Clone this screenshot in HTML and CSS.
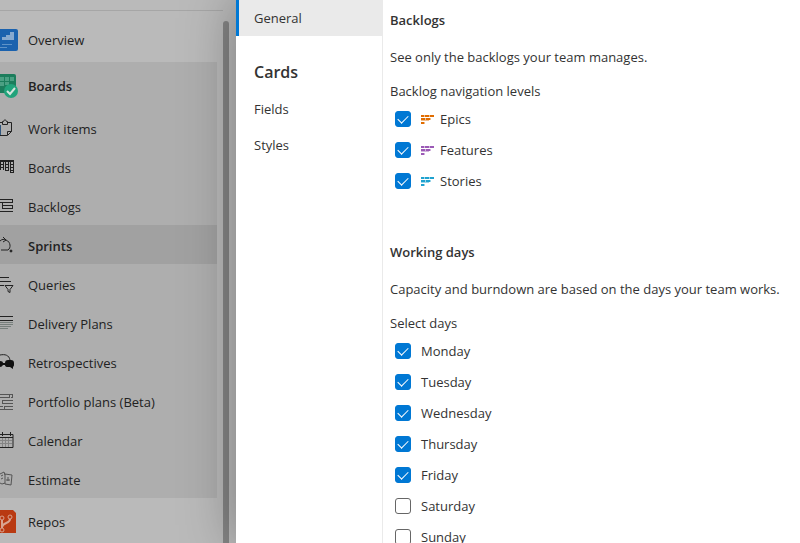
FILE: index.html
```
<!doctype html>
<html lang="en">
    <head>
        <meta charset="UTF-8" />
        <meta name="viewport" content="width=device-width, initial-scale=1.0" />
        <title>Team Settings</title>
        <link rel="stylesheet" href="styles.css">
    </head>
    <body>
        <nav class="sidebar">
            <div class="sidebar-nav">
                <a class="product" href="#">
                    <svg class="icon" viewBox="0 0 20 24">
                        <path d="M0 1h16a2 2 0 0 1 2 2v18a2 2 0 0 1-2 2H0z" fill="#1b62ae" />
                        <path d="M2 9h4v3H2zM6 7h4v5H6zM10 4h4v8h-4z" fill="#86a9cf" />
                        <path d="M2 16h10v1H2zM0 19h7v1H0z" fill="#5f93c8" />
                    </svg>
                    Overview
                </a>
                <div class="group">
                    <a class="product open" href="#">
                        <svg class="icon" viewBox="0 0 20 24">
                            <path d="M0 0h14a2 2 0 0 1 2 2v17H0z" fill="#1c7d5c" />
                            <path d="M0 3h4v4H0zM5 3h4v4H5zM10 3h4v4h-4zM0 8h4v4H0zM5 8h4v3H5z" fill="#4ba083" />
                            <circle cx="11" cy="17" r="7" fill="#21a37b" />
                            <path d="M7 17l3 3 5-6" fill="none" stroke="#d5e5de" stroke-width="2" />
                        </svg>
                        Boards
                    </a>
                    <a class="item" href="#">
                        <svg class="icon line" viewBox="0 0 20 24">
                            <path d="M0 5.500h2M8 5.500h3.500v9l-4 4H0M7.500 18v-3.500h4" />
                            <path d="M2.500 7.500v-3h1c0-2 3-2 3 0h1v3z" />
                            <path d="M.5 8v10" stroke="#31567d" />
                        </svg>
                        Work items
                    </a>
                    <a class="item" href="#">
                        <svg class="icon line" viewBox="0 0 20 24">
                            <path d="M0 5h14" stroke-width="2" />
                            <path d="M0 8.500h3M5 8.500h3M10 8.500h4M0 11.500h3M5 11.500h3M10 11.500h4M5 14.500h3M10 14.500h4M10 16.500h4" />
                            <path d="M.5 6v8M3.500 6v8M5.500 6v9M8.500 6v9M10.500 6v11M13.500 6v11" />
                        </svg>
                        Boards
                    </a>
                    <a class="item" href="#">
                        <svg class="icon line" viewBox="0 0 20 24">
                            <path d="M0 4.500h13M0 7.500h13M2 10.500h11M2 13.500h11M0 16.500h13M2.500 7v7M12.500 4v4M12.500 10v4" />
                        </svg>
                        Backlogs
                    </a>
                    <a class="item selected" href="#">
                        <svg class="icon line" viewBox="0 0 20 24">
                            <path d="M0 7c2-2 4-2 6-1 5 2 5 8 2 10H1" />
                            <path d="M3 3l3 3-3 2" />
                            <circle cx="11" cy="17" r="1" fill="#222" />
                        </svg>
                        Sprints
                    </a>
                    <a class="item" href="#">
                        <svg class="icon line" viewBox="0 0 20 24">
                            <path d="M0 4.500h9M0 8.500h11M0 12.500h4" />
                            <path d="M5 12.500h8l-3 4v3l-2-1v-2z" />
                        </svg>
                        Queries
                    </a>
                    <a class="item" href="#">
                        <svg class="icon line" viewBox="0 0 20 24">
                            <path d="M0 4.500h13M0 8.500h13" />
                            <path d="M0 10.500h13M0 12.500h13M0 14.500h11M0 16.500h8" stroke="#777f7c" />
                        </svg>
                        Delivery Plans
                    </a>
                    <a class="item" href="#">
                        <svg class="icon line" viewBox="0 0 20 24">
                            <path d="M0 4c5-1 9 0 10 5" />
                            <path d="M0 10q3 0 3 2h2q0-3 3-3h3q3 0 3 3v2q0 1-1 2v2l-3-2H8q-3 0-3-2H3q-1 2-3 2z" fill="#111" stroke="none" />
                        </svg>
                        Retrospectives
                    </a>
                    <a class="item" href="#">
                        <svg class="icon line light" viewBox="0 0 20 24">
                            <path d="M0 4.500h13M0 7.500h9M11 7.500h2M2 10.500h11M2 13.500h11M0 16.500h3M5 16.500h8M0 19.500h13M2.500 10v4M9.500 4v4M4.500 16v4M12.500 4v4" />
                        </svg>
                        Portfolio plans (Beta)
                    </a>
                    <a class="item" href="#">
                        <svg class="icon line" viewBox="0 0 20 24">
                            <path d="M0 5.500h13v13H0M0 8.500h13M2.500 3v4M10.500 3v4" />
                            <path d="M0 11.500h12M0 14.500h12M2.500 9v9M5.500 9v9M8.500 9v9" stroke="#858585" />
                        </svg>
                        Calendar
                    </a>
                    <a class="item" href="#">
                        <svg class="icon line light" viewBox="0 0 20 24">
                            <path d="M0 6l4-2 1 3M5 6l7 1-1 10-6-1zM0 15l2 1 3-1" />
                            <path d="M1 8l2-1M1 11l2-1M8 9v4M6 12h4" />
                        </svg>
                        Estimate
                    </a>
                </div>
                <a class="product" href="#">
                    <svg class="icon" viewBox="0 0 20 24">
                        <path d="M0 0h13l3 3v20H0z" fill="#b93a12" />
                        <g fill="none" stroke="#d9a490" stroke-width="1">
                            <circle cx="2" cy="8" r="2" />
                            <circle cx="10" cy="7" r="2" />
                            <circle cx="2" cy="20" r="2" />
                            <path d="M2 10v8M10 9c0 5-7 3-8 8" stroke-width="2" />
                        </g>
                    </svg>
                    Repos
                </a>
            </div>
            <div class="scrollbar"></div>
        </nav>

        <main class="dialog">
            <nav class="tabs">
                <a class="tab active" href="#">General</a>
                <h2>Cards</h2>
                <a class="tab" href="#">Fields</a>
                <a class="tab" href="#">Styles</a>
            </nav>

            <div class="content">
                <section>
                    <h3>Backlogs</h3>
                    <p>See only the backlogs your team manages.</p>
                    <fieldset>
                        <legend>Backlog navigation levels</legend>
                        <label class="check">
                            <input type="checkbox" checked />
                            <svg class="level epics" viewBox="0 0 13 10"><use href="#level" /></svg>
                            Epics
                        </label>
                        <label class="check">
                            <input type="checkbox" checked />
                            <svg class="level features" viewBox="0 0 13 10"><use href="#level" /></svg>
                            Features
                        </label>
                        <label class="check">
                            <input type="checkbox" checked />
                            <svg class="level stories" viewBox="0 0 13 10"><use href="#level" /></svg>
                            Stories
                        </label>
                    </fieldset>
                </section>

                <section>
                    <h3>Working days</h3>
                    <p>Capacity and burndown are based on the days your team works.</p>
                    <fieldset>
                        <legend>Select days</legend>
                        <label class="check"><input type="checkbox" checked /> Monday</label>
                        <label class="check"><input type="checkbox" checked /> Tuesday</label>
                        <label class="check"><input type="checkbox" checked /> Wednesday</label>
                        <label class="check"><input type="checkbox" checked /> Thursday</label>
                        <label class="check"><input type="checkbox" checked /> Friday</label>
                        <label class="check"><input type="checkbox" /> Saturday</label>
                        <label class="check"><input type="checkbox" /> Sunday</label>
                    </fieldset>
                </section>
            </div>
        </main>

        <!-- shared backlog level glyph, coloured by its class -->
        <svg class="sprite">
            <symbol id="level" viewBox="0 0 13 10">
                <path d="M0 1h13v2H0zM0 4h10v2H0zM0 6h8v1H0zM0 8h4v2H0z" opacity=".45" />
                <path d="M0 1h3v2H0zM4 1h4v2H4zM9 1h4v2H9zM0 4h4v2H0zM5 4h4v2H5zM0 8h3v2H0z" />
            </symbol>
        </svg>
    </body>
</html>
```
FILE: styles.css
```
* {
    box-sizing: border-box;
}
body {
    display: flex;
    height: 100vh;
    margin: 0;
    overflow: hidden;
    background: #bababa;
    color: #333;
    font-family: "Segoe UI", "Open Sans", sans-serif;
    font-size: 13px;
    line-height: 20px;
}
a {
    color: inherit;
    text-decoration: none;
}
h2,
h3,
p {
    margin: 0;
}

/* left navigation */
.sidebar {
    display: flex;
    flex: none;
    width: 236px;
    padding-top: 10px;
    color: #222;
}
.sidebar-nav {
    width: 223px;
    padding-top: 5px;
    border-top: 1px solid #a6a6a6;
}
.product,
.item {
    display: flex;
    align-items: center;
    gap: 8px;
    height: 39px;
    padding-top: 2px;
}
.product {
    height: 46px;
}
.product.open {
    font-weight: 600;
}
.group {
    width: 217px;
    background: #aeaeae;
}
.item.selected {
    background: #a1a1a1;
    font-weight: 600;
}
.icon {
    flex: none;
    width: 20px;
    height: 24px;
}
.line {
    fill: none;
    stroke: #222;
}
.line.light {
    stroke: #555;
}
.scrollbar {
    width: 6px;
    margin-top: 11px;
    border-radius: 3px 3px 0 0;
    background: #858585;
}

/* settings dialog */
.dialog {
    display: flex;
    flex: 1;
    background: #fff;
    box-shadow: 0 0 50px rgba(0, 0, 0, 0.35);
}
.tabs {
    flex: none;
    width: 147px;
    border-right: 1px solid #eaeaea;
}
.tab {
    display: block;
    height: 36px;
    padding: 8px 18px;
}
.tab.active {
    padding-left: 15px;
    border-left: 3px solid #0078d4;
    background: #eaeaea;
}
.tabs h2 {
    padding: 26px 18px 9px;
    font-size: 16px;
    font-weight: 600;
}
.content {
    flex: 1;
    padding: 2px 7px;
}
section {
    margin-bottom: 38px;
}
h3 {
    padding: 8px 0;
    font-size: 13px;
    font-weight: 600;
}
p {
    padding: 9px 0;
}
fieldset {
    margin: 0;
    padding: 0;
    border: 0;
}
legend {
    padding: 5px 0 2px;
}
.check {
    display: flex;
    align-items: center;
    gap: 10px;
    height: 31px;
    padding-left: 5px;
}
.check input {
    appearance: none;
    width: 16px;
    height: 16px;
    margin: 0;
    border: 1px solid #666;
    border-radius: 3px;
}
.check input:checked {
    border-color: #0078d4;
    background: #0078d4;
}
.check input:checked::before {
    content: "";
    display: block;
    width: 9px;
    height: 5px;
    margin: 3px 2px;
    border: solid #fff;
    border-width: 0 0 1px 1px;
    transform: rotate(-45deg);
}
.level {
    width: 13px;
    height: 10px;
    margin-right: -4px;
}
.epics {
    fill: #e06c00;
}
.features {
    fill: #9b59b6;
}
.stories {
    fill: #1fa2cf;
}
.sprite {
    display: none;
}
```
